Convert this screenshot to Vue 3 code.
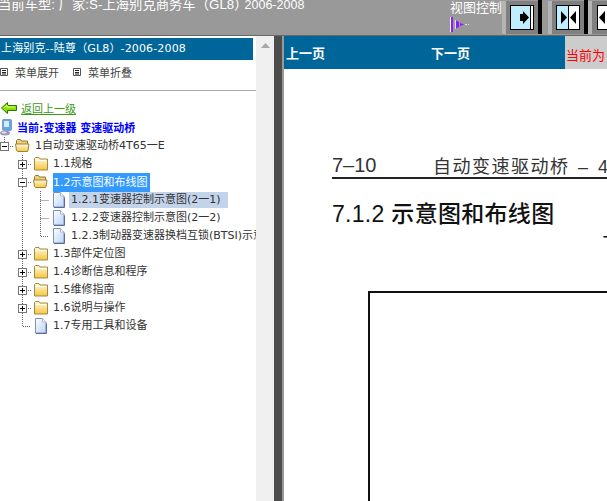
<template>
  <div class="page">
    <!-- 渐变定义 -->
    <svg class="defs" width="0" height="0">
      <defs>
        <linearGradient id="folderFill" x1="0" y1="0" x2="0" y2="1">
          <stop offset="0" stop-color="#fffbe0" />
          <stop offset="1" stop-color="#f5c53c" />
        </linearGradient>
        <linearGradient id="fileFill" x1="0" y1="0" x2="1" y2="1">
          <stop offset="0" stop-color="#ffffff" />
          <stop offset="1" stop-color="#b9d4f6" />
        </linearGradient>
      </defs>
    </svg>

    <!-- 顶部 -->
    <div class="top-bar">
      <div class="car-info">当前车型: 厂家:S-上海别克商务车（GL8）<span class="car-year">2006-2008</span></div>
      <div class="view-ctrl">
        <span class="view-title">视图控制</span>
        <svg class="view-arrow" width="20" height="15" viewBox="0 0 20 15">
          <path d="M0 0h1v15H0z" fill="#fff" />
          <path d="M1 0h2v15H1z" fill="#8a1cff" />
          <path d="M5 3h1v9H5z" fill="#e8d8ff" />
          <path d="M6 3.500l3 1.500v5l-3 1.500z" fill="#8a1cff" />
          <path d="M10 6l4 1.500-4 1.500z" fill="#8a1cff" />
          <path d="M15 7h2v1h-2zM18 7h1v1h-1z" fill="#e8d8ff" />
        </svg>
      </div>
      <button class="view-btn" v-for="b in viewBtns" :key="b">
        <svg width="40" height="35" viewBox="0 0 40 35">
          <rect x="0" y="1" width="4" height="33" fill="#b4b4b4" />
          <rect x="4" y="1" width="32" height="33" fill="#808080" />
          <rect x="36" y="0" width="4" height="34" fill="#000" />
          <template v-if="b === 'right'">
            <rect x="8.500" y="5.500" width="23" height="24" fill="#bfeeff" stroke="#000" />
            <rect x="29" y="6" width="2" height="23" fill="#fff" />
            <path d="M28.500 6v23" stroke="#000" />
            <path d="M18 14h3v-3l6 6.500-6 6.500v-3h-3z" fill="#000" />
          </template>
          <template v-else-if="b === 'both'">
            <rect x="8.500" y="5.500" width="23" height="24" fill="#bfeeff" stroke="#000" />
            <rect x="21" y="6" width="10" height="23" fill="#fff" />
            <path d="M20.500 6v23" stroke="#000" />
            <path d="M13 11l6 6.500-6 6.500z M28 11l-6 6.500 6 6.500z" fill="#000" />
          </template>
          <template v-else>
            <rect x="9.500" y="5.500" width="23" height="24" fill="#fff" stroke="#000" />
            <path d="M17 11l-6 6.500 6 6.500z" fill="#000" />
          </template>
        </svg>
      </button>
    </div>

    <div class="main">
      <!-- 左侧目录 -->
      <div class="side">
        <div class="side-inner">
          <div class="side-title">上海别克--陆尊（GL8）-2006-2008</div>
          <div class="menu-row">
            <span class="menu-item">
              <svg width="8" height="8" viewBox="0 0 8 8"><path d="M.5.5h7v7h-7z" fill="#fff" stroke="#555" /><path d="M2 2.500h4M2 4.500h4M2 6h4" stroke="#222" /></svg>
              菜单展开
            </span>
            <span class="menu-item">
              <svg width="8" height="8" viewBox="0 0 8 8"><path d="M.5.5h7v7h-7z" fill="#fff" stroke="#555" /><path d="M2 2.500h4M2 4.500h4M2 6h4" stroke="#222" /></svg>
              菜单折叠
            </span>
          </div>
          <div class="back-row">
            <svg width="16" height="12" viewBox="0 0 16 12">
              <path d="M.5 6L6.500.5v3h9v5h-9v3z" fill="#8ee000" stroke="#1f7a00" />
              <path d="M3 6l3-3v2h8" fill="none" stroke="#e4ff80" />
            </svg>
            <a class="back-link">返回上一级</a>
          </div>
          <div class="current-row">
            <svg width="12" height="17" viewBox="0 0 12 17">
              <rect x="2.500" y="0.500" width="9" height="11" rx="1" fill="#5aa8f0" stroke="#8a97b0" />
              <path d="M4 2h5v6H4z" fill="#d6ecff" />
              <ellipse cx="5" cy="14" rx="5" ry="2.500" fill="#9a9ab8" />
              <ellipse cx="4" cy="13.500" rx="2.500" ry="1" fill="#e4e4f0" />
            </svg>
            <span class="current-text">当前:变速器 变速驱动桥</span>
          </div>
          <div class="tree">
            <div class="tree-row" v-for="row in rows" :key="row.text">
              <svg v-for="(c, i) in row.cells" :key="i" class="cell" width="18" height="18" viewBox="0 0 18 18">
                <path :d="cellPaths[c]" stroke="#666" stroke-dasharray="1 1" fill="none" />
                <template v-if="c === 'plus' || c === 'minus' || c === 'rootminus'">
                  <rect x="5.500" y="5.500" width="8" height="8" fill="#fff" stroke="#777" />
                  <path d="M7 9.500h5" stroke="#000" />
                  <path v-if="c === 'plus'" d="M9.500 7v5" stroke="#000" />
                </template>
              </svg>
              <svg class="node-icon" width="16" height="16" viewBox="0 0 16 16">
                <template v-if="row.icon === 'file'">
                  <path d="M2.500 .5h7l3.500 3.500v11h-10.500z" fill="url(#fileFill)" stroke="#7e8fbe" />
                  <path d="M9.500 .5v3.500h3.500" fill="#fff" stroke="#a8b6d8" />
                  <path d="M3 15.500h10.500v-10" fill="none" stroke="#5a6a9a" />
                </template>
                <template v-else-if="row.icon === 'open'">
                  <path d="M1.500 4v-1.500l1-1h3l1 1.500h6v3.500h-11z" fill="#f0cf70" stroke="#8f7a3c" />
                  <path d="M.5 6h13.500l-1 6.500-.5 1h-10l-1-1z" fill="url(#folderFill)" stroke="#9a8240" />
                </template>
                <template v-else>
                  <path d="M1.500 14V2.500l1-1h3.500l1 1.500h7.500v11z" fill="url(#folderFill)" stroke="#a08a45" />
                  <path d="M2.500 4.500h11" stroke="#fffdf0" />
                </template>
              </svg>
              <span class="node-label" :class="row.cls">{{ row.text }}</span>
            </div>
          </div>
        </div>
        <div class="scroll-track">
          <svg width="9" height="5" viewBox="0 0 9 5"><path d="M4.500 0L9 5H0z" fill="#a8a8a8" /></svg>
        </div>
      </div>
      <div class="divider"></div>

      <!-- 右侧内容 -->
      <div class="content">
        <div class="pager">
          <span class="pager-prev">上一页</span>
          <span class="pager-next">下一页</span>
          <span class="pager-cur">当前为</span>
        </div>
        <div class="doc">
          <div class="doc-head">
            <span class="doc-no">7–10</span>
            <span class="doc-chapter">自动变速驱动桥 – 4T65-E</span>
          </div>
          <div class="doc-title">7.1.2 示意图和布线图</div>
          <div class="doc-mark">T</div>
          <div class="doc-frame"></div>
        </div>
      </div>
    </div>
  </div>
</template>

<script setup>
const viewBtns = ['right', 'both', 'left'];

const cellPaths = {
  blank: '',
  v: 'M9.500 0V18',
  tee: 'M9.500 0V18M9.500 9.500H18',
  corner: 'M9.500 0V9.500H18',
  plus: 'M9.500 0V18M13 9.500H18',
  minus: 'M9.500 0V18M13 9.500H18',
  rootminus: 'M9.500 0V5M13 9.500H18'
};

const rows = [
  { text: '1自动变速驱动桥4T65一E', icon: 'open', cells: ['rootminus'] },
  { text: '1.1规格', icon: 'folder', cells: ['blank', 'plus'] },
  { text: '1.2示意图和布线图', icon: 'open', cells: ['blank', 'minus'], cls: 'selected' },
  { text: '1.2.1变速器控制示意图(2一1)', icon: 'file', cells: ['blank', 'v', 'tee'], cls: 'current' },
  { text: '1.2.2变速器控制示意图(2一2)', icon: 'file', cells: ['blank', 'v', 'tee'] },
  { text: '1.2.3制动器变速器换档互锁(BTSI)示意图', icon: 'file', cells: ['blank', 'v', 'corner'] },
  { text: '1.3部件定位图', icon: 'folder', cells: ['blank', 'plus'] },
  { text: '1.4诊断信息和程序', icon: 'folder', cells: ['blank', 'plus'] },
  { text: '1.5维修指南', icon: 'folder', cells: ['blank', 'plus'] },
  { text: '1.6说明与操作', icon: 'folder', cells: ['blank', 'plus'] },
  { text: '1.7专用工具和设备', icon: 'file', cells: ['blank', 'corner'] }
];
</script>

<style>
html, body {
  margin: 0;
  overflow: hidden;
}
</style>

<style scoped>
.page {
  width: 607px;
  height: 501px;
  display: flex;
  flex-direction: column;
  overflow: hidden;
  background: #fff;
  font-family: "DejaVu Sans", "Noto Sans CJK SC", sans-serif;
  font-size: 11px;
  color: #333;
}

.defs {
  display: block;
  flex: none;
}

.top-bar {
  height: 35px;
  flex: none;
  display: flex;
  background: #999;
  border-bottom: 1px solid #666;
  font-family: "Liberation Sans", "Noto Sans CJK SC", sans-serif;
  color: #fff;
  overflow: hidden;
}

.car-info {
  flex: none;
  margin-left: -2px;
  width: 452px;
  margin-top: -4px;
  font-size: 13.33px;
  line-height: 18px;
  white-space: nowrap;
}

.car-year {
  font-size: 12.5px;
  margin-left: -3px;
}

.view-ctrl {
  flex: none;
  width: 52px;
  display: flex;
  flex-direction: column;
  align-items: flex-start;
}

.view-title {
  font-size: 13px;
  line-height: 15px;
  white-space: nowrap;
}

.view-arrow {
  margin-top: 2px;
}

.view-btn {
  width: 40px;
  height: 35px;
  padding: 0;
  border: 0;
  background: none;
  display: block;
  flex: none;
}

.view-btn:first-of-type {
  margin-right: 6px;
}

.view-btn svg {
  display: block;
}

.main {
  flex: 1;
  display: flex;
  min-height: 0;
}

.side {
  width: 274px;
  flex: none;
  display: flex;
  background: #fff;
}

.side-inner {
  width: 256px;
  flex: none;
  overflow: hidden;
  padding-top: 2px;
}

.side-title {
  width: 253px;
  height: 22px;
  background: #006699;
  color: #fff;
  line-height: 22px;
  padding-left: 1px;
  box-sizing: border-box;
  letter-spacing: 0.15px;
  white-space: nowrap;
}

.menu-row {
  height: 31px;
  display: flex;
  align-items: center;
  gap: 14px;
  padding-bottom: 6px;
  box-sizing: border-box;
  border-bottom: 1px solid #aaa;
  margin-bottom: 9px;
  color: #444;
}

.menu-item {
  display: flex;
  align-items: center;
  gap: 7px;
}

.back-row {
  height: 16px;
  display: flex;
  align-items: center;
  gap: 4px;
  padding-left: 1px;
}

.back-link {
  color: #3a9a20;
  text-decoration: underline;
}

.current-row {
  height: 18px;
  margin-top: 2px;
  display: flex;
  align-items: center;
  gap: 5px;
}

.current-text {
  font-weight: bold;
  color: #0000ff;
  white-space: nowrap;
}

.tree {
  margin-left: -5px;
  padding-top: 1px;
}

.tree-row {
  height: 18px;
  display: flex;
  align-items: center;
  white-space: nowrap;
}

.cell {
  flex: none;
  display: block;
}

.node-icon {
  flex: none;
  margin: 0 4px 0 2px;
}

.node-label {
  line-height: 18px;
}

.selected {
  background: #3399ff;
  color: #fff;
  line-height: 19px;
  padding-right: 2px;
}

.current {
  background: #c2d3ea;
  line-height: 16px;
  margin-left: -2px;
  padding: 0 7px 0 2px;
}

.scroll-track {
  width: 18px;
  flex: none;
  background: #f0f0f0;
  display: flex;
  justify-content: center;
  padding-top: 7px;
  box-sizing: border-box;
}

.scroll-track svg {
  display: block;
}

.divider {
  width: 10px;
  flex: none;
  background: #4d4d4d;
  border-right: 2px solid #999;
  box-sizing: border-box;
}

.content {
  flex: 1;
  min-width: 0;
  overflow: hidden;
  display: flex;
  flex-direction: column;
}

.pager {
  height: 33px;
  flex: none;
  display: flex;
  align-items: center;
  background: #006699;
  color: #fff;
  font-family: "Liberation Sans", "Noto Sans CJK SC", sans-serif;
  font-size: 13px;
  font-weight: bold;
  white-space: nowrap;
}

.pager-prev {
  margin-left: 2px;
  width: 145px;
}

.pager-next {
  width: 134px;
}

.pager-cur {
  width: 42px;
  height: 33px;
  padding-left: 1px;
  box-sizing: border-box;
  line-height: 39px;
  background: #ccc;
  color: #ff0000;
  font-weight: normal;
  font-size: 13px;
}

.doc {
  flex: 1;
  overflow: hidden;
  padding: 84px 0 0 48px;
  font-family: "Liberation Sans", "Noto Sans CJK SC", sans-serif;
  color: #111;
}

.doc-head {
  width: 400px;
  height: 24px;
  border-bottom: 2px solid #222;
  display: flex;
  align-items: center;
  font-size: 20px;
  white-space: nowrap;
  color: #333;
}

.doc-no {
  width: 101px;
}

.doc-chapter {
  letter-spacing: 1.5px;
  word-spacing: 2px;
  font-size: 18px;
}

.doc-title {
  margin-top: 22px;
  font-size: 23px;
  line-height: 27px;
  font-weight: 500;
  letter-spacing: 0.3px;
  white-space: nowrap;
}

.doc-mark {
  margin: 0 0 0 271px;
  font-size: 18px;
  line-height: 18px;
  padding-top: 6px;
}

.doc-frame {
  margin: 39px 0 0 36px;
  width: 400px;
  height: 300px;
  border: 2px solid #111;
}
</style>
